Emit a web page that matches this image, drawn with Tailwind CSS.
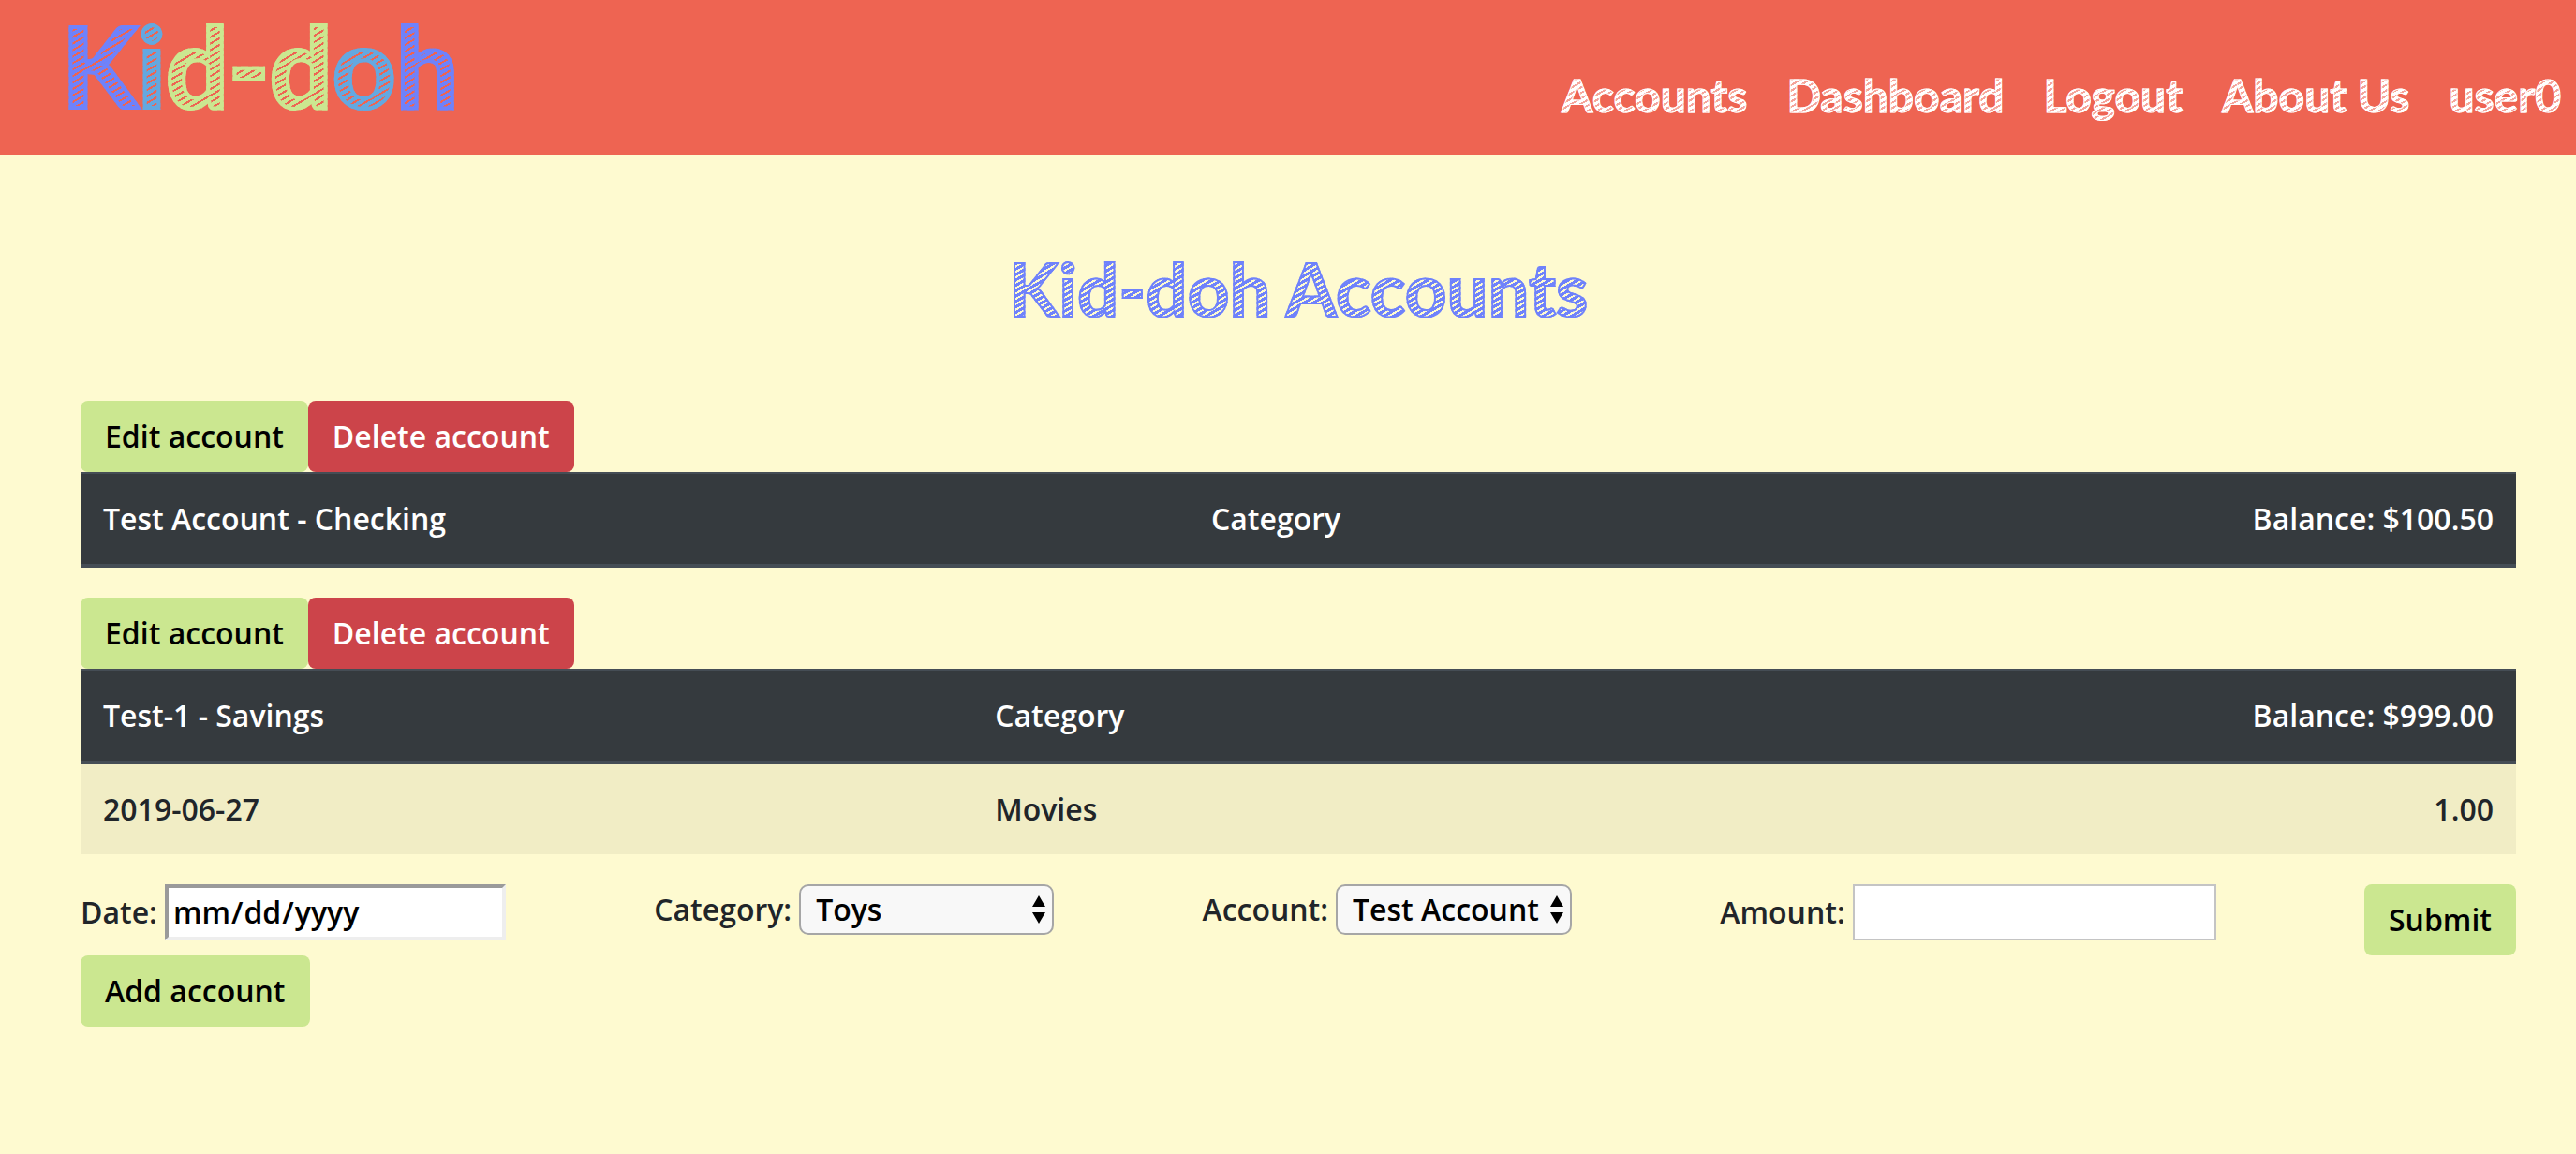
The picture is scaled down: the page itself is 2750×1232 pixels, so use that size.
<!DOCTYPE html>
<html lang="en">
<head>
<meta charset="utf-8">
<meta name="viewport" content="width=device-width, initial-scale=1">
<title>Kid-doh Accounts</title>
<script src="https://cdn.jsdelivr.net/npm/@tailwindcss/browser@4"></script>
</head>
<body class="min-h-screen bg-[#fefad0] font-['Open_Sans',sans-serif] text-[32px] leading-[48px] font-semibold text-[#212529]">
  <header class="flex h-[166px] items-start justify-between bg-[#ee6452] pr-4 pl-[66px] font-['Lato',sans-serif] whitespace-nowrap">
    <!-- Logo letters: solid outline with a hatched, chalk-like fill -->
    <a href="#" class="text-[118px] leading-[140px] font-bold text-transparent"><span class="bg-[repeating-linear-gradient(150deg,#6f82fb_0_4px,#ee6452_4px_6px)] bg-clip-text [-webkit-text-stroke:4px_#6f82fb]">K</span><span class="bg-[repeating-linear-gradient(150deg,#64a8e0_0_4px,#ee6452_4px_6px)] bg-clip-text [-webkit-text-stroke:4px_#64a8e0]">i</span><span class="bg-[repeating-linear-gradient(150deg,#cbe790_0_4px,#ee6452_4px_6px)] bg-clip-text [-webkit-text-stroke:4px_#cbe790]">d-d</span><span class="bg-[repeating-linear-gradient(150deg,#64a8e0_0_4px,#ee6452_4px_6px)] bg-clip-text [-webkit-text-stroke:4px_#64a8e0]">o</span><span class="bg-[repeating-linear-gradient(150deg,#6f82fb_0_4px,#ee6452_4px_6px)] bg-clip-text [-webkit-text-stroke:4px_#6f82fb]">h</span></a>
    <nav class="flex gap-[42px] pt-[72px] text-[48px] leading-[60px] font-bold text-transparent">
      <a href="#" class="bg-[repeating-linear-gradient(150deg,#ffffff_0_3px,#f4a59b_3px_5px)] bg-clip-text [-webkit-text-stroke:1px_#ffffff]">Accounts</a>
      <a href="#" class="bg-[repeating-linear-gradient(150deg,#ffffff_0_3px,#f4a59b_3px_5px)] bg-clip-text [-webkit-text-stroke:1px_#ffffff]">Dashboard</a>
      <a href="#" class="bg-[repeating-linear-gradient(150deg,#ffffff_0_3px,#f4a59b_3px_5px)] bg-clip-text [-webkit-text-stroke:1px_#ffffff]">Logout</a>
      <a href="#" class="bg-[repeating-linear-gradient(150deg,#ffffff_0_3px,#f4a59b_3px_5px)] bg-clip-text [-webkit-text-stroke:1px_#ffffff]">About Us</a>
      <a href="#" class="bg-[repeating-linear-gradient(150deg,#ffffff_0_3px,#f4a59b_3px_5px)] bg-clip-text [-webkit-text-stroke:1px_#ffffff]">user0</a>
    </nav>
  </header>

  <main class="pr-16 pl-[86px]">
    <h1 class="pt-[94px] pb-[72px] text-center font-['Lato',sans-serif] text-[78px] leading-[96px] font-bold text-transparent"><span class="bg-[repeating-linear-gradient(150deg,#6f82fb_0_3px,#fefad0_3px_5px)] bg-clip-text [-webkit-text-stroke:2px_#6f82fb]">Kid-doh Accounts</span></h1>

    <section class="mb-8">
      <div class="flex">
        <button type="button" class="rounded-lg bg-[#cbe790] px-[26px] py-[14px] text-black">Edit account</button>
        <button type="button" class="rounded-lg bg-[#cc444a] px-[26px] py-[14px] text-white">Delete account</button>
      </div>
      <table class="w-full">
        <thead>
          <tr class="border-t-2 border-b-4 border-[#454d55] bg-[#353a3e] text-white">
            <th scope="col" class="w-[45.5%] p-6 text-left font-semibold">Test Account - Checking</th>
            <th scope="col" class="p-6 text-left font-semibold">Category</th>
            <th scope="col" class="p-6 text-right font-semibold">Balance: $100.50</th>
          </tr>
        </thead>
      </table>
    </section>

    <section class="mb-8">
      <div class="flex">
        <button type="button" class="rounded-lg bg-[#cbe790] px-[26px] py-[14px] text-black">Edit account</button>
        <button type="button" class="rounded-lg bg-[#cc444a] px-[26px] py-[14px] text-white">Delete account</button>
      </div>
      <table class="w-full">
        <thead>
          <tr class="border-t-2 border-b-4 border-[#454d55] bg-[#353a3e] text-white">
            <th scope="col" class="p-6 text-left font-semibold">Test-1 - Savings</th>
            <th scope="col" class="p-6 text-left font-semibold">Category</th>
            <th scope="col" class="p-6 text-right font-semibold">Balance: $999.00</th>
          </tr>
        </thead>
        <tbody>
          <tr class="bg-black/5">
            <td class="p-6">2019-06-27</td>
            <td class="p-6">Movies</td>
            <td class="p-6 text-right">1.00</td>
          </tr>
        </tbody>
      </table>
    </section>

    <form class="flex items-start justify-between">
      <div class="flex items-center gap-2">
        <label for="date">Date:</label>
        <input id="date" type="date" class="h-[60px] w-[364px] border-4 border-t-[#9a9a9a] border-r-[#eeeeee] border-b-[#eeeeee] border-l-[#9a9a9a] bg-white px-1 text-black [&::-webkit-calendar-picker-indicator]:hidden">
      </div>
      <div class="flex items-center gap-2">
        <label for="category">Category:</label>
        <div class="relative">
          <select id="category" class="block h-[54px] w-[272px] appearance-none rounded-[10px] border-2 border-[#a6a6a6] bg-[#f8f8f8] px-4 leading-[48px] text-black"><option>Toys</option><option>Movies</option></select>
          <svg class="pointer-events-none absolute top-3 right-2 h-[30px] w-4" viewBox="0 0 16 30" aria-hidden="true"><path d="M8 0l7 12H1zM8 30l7-12H1z"/></svg>
        </div>
      </div>
      <div class="flex items-center gap-2">
        <label for="account">Account:</label>
        <div class="relative">
          <select id="account" class="block h-[54px] w-[252px] appearance-none rounded-[10px] border-2 border-[#a6a6a6] bg-[#f8f8f8] pl-4 leading-[48px] text-black"><option>Test Account</option><option>Test-1</option></select>
          <svg class="pointer-events-none absolute top-3 right-2 h-[30px] w-4" viewBox="0 0 16 30" aria-hidden="true"><path d="M8 0l7 12H1zM8 30l7-12H1z"/></svg>
        </div>
      </div>
      <div class="flex items-center gap-2">
        <label for="amount">Amount:</label>
        <input id="amount" type="text" class="h-[60px] w-[388px] border-2 border-[#c4c4c4] bg-white px-1 text-black">
      </div>
      <button type="submit" class="rounded-lg bg-[#cbe790] px-[26px] py-[14px] text-black">Submit</button>
    </form>
    <button type="button" class="rounded-lg bg-[#cbe790] px-[26px] py-[14px] text-black">Add account</button>
  </main>
</body>
</html>
